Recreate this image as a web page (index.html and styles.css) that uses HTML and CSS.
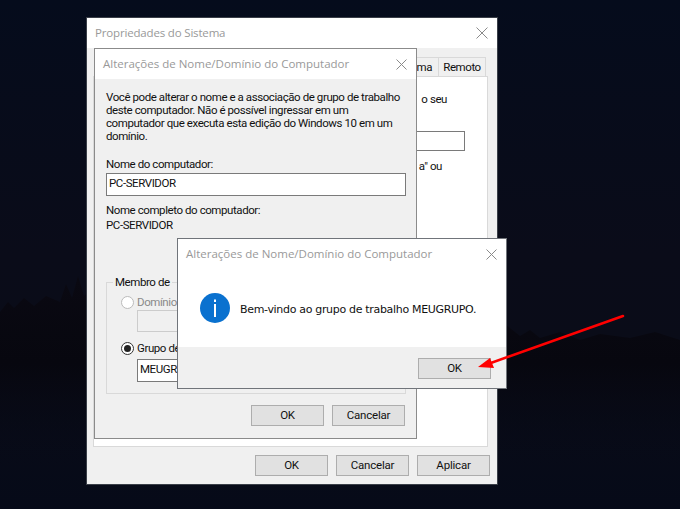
FILE: index.html
```html
<!DOCTYPE html>
<html lang="pt-BR">
<head>
<meta charset="utf-8">
<title>Propriedades do Sistema</title>
<link rel="stylesheet" href="styles.css">
</head>
<body>
<main class="desktop">
  <svg class="scenery" width="680" height="509" viewBox="0 0 680 509" aria-hidden="true">
    <defs>
      <linearGradient id="fade" x1="0" y1="0" x2="0" y2="1">
        <stop offset="0" stop-color="#0a0912"/>
        <stop offset=".45" stop-color="#07070f"/>
        <stop offset="1" stop-color="#070a18" stop-opacity="0"/>
      </linearGradient>
    </defs>
    <path fill="url(#fade)" d="M0 312 L8 302 14 308 24 298 34 306 46 296 60 302 66 284 72 298 78 276 84 296 90 290 500 320 520 336 530 330 540 338 560 332 580 340 600 334 630 338 655 332 680 340 V470 H0Z"/>
  </svg>

  <section class="window sys">
    <header class="titlebar"><span class="title sys-title">Propriedades do Sistema</span><svg class="close" width="12" height="12" viewBox="0 0 12 12"><path d="M.5.5l11 11M11.500.5l-11 11"/></svg></header>
    <div class="sys-body">
      <nav class="tabs">
        <span class="tab tab-cut">ema</span>
        <span class="tab tab-remote">Remoto</span>
      </nav>
      <div class="panel">
        <p class="hint">o seu</p>
        <div class="panel-input"></div>
        <p class="hint example">a" ou</p>
      </div>
      <footer class="actions sys-actions">
        <button class="btn">OK</button>
        <button class="btn">Cancelar</button>
        <button class="btn">Aplicar</button>
      </footer>
    </div>
  </section>

  <section class="window rename">
    <header class="titlebar"><span class="title">Alterações de Nome/Domínio do Computador</span><svg class="close" width="11" height="11" viewBox="0 0 11 11"><path d="M.5.5l10 10M10.500.5l-10 10"/></svg></header>
    <div class="rename-body">
      <p class="intro">Você pode alterar o nome e a associação de grupo de trabalho<br>deste computador. Não é possível ingressar em um<br>computador que executa esta edição do Windows 10 em um<br>domínio.</p>
      <label class="field-label">Nome do computador:</label>
      <div class="input name-input">PC-SERVIDOR</div>
      <p class="full-label">Nome completo do computador:</p>
      <p class="full-value">PC-SERVIDOR</p>
      <fieldset class="member">
        <legend>Membro de</legend>
        <div class="radio-row disabled"><span class="radio"></span><span>Domínio</span></div>
        <div class="input sub-input blank"></div>
        <div class="radio-row"><span class="radio on"></span><span>Grupo de</span></div>
        <div class="input sub-input second">MEUGR</div>
      </fieldset>
      <footer class="actions rename-actions">
        <button class="btn">OK</button>
        <button class="btn">Cancelar</button>
      </footer>
    </div>
  </section>

  <section class="window welcome">
    <header class="titlebar"><span class="title">Alterações de Nome/Domínio do Computador</span><svg class="close" width="11" height="11" viewBox="0 0 11 11"><path d="M.5.5l10 10M10.500.5l-10 10"/></svg></header>
    <div class="message">
      <svg class="info" width="30" height="30" viewBox="0 0 30 30"><circle cx="15" cy="15" r="15" fill="#0a71cf"/><rect x="14" y="6.500" width="2" height="2.500" fill="#fff"/><rect x="14" y="11" width="2" height="13" fill="#fff"/></svg>
      <span class="message-text">Bem-vindo ao grupo de trabalho MEUGRUPO.</span>
    </div>
    <footer class="welcome-foot"><button class="btn">OK</button></footer>
  </section>

  <svg class="arrow" width="680" height="509" viewBox="0 0 680 509" aria-hidden="true">
    <path d="M623 316 L488 364" stroke="#f00" stroke-width="2.500" stroke-linecap="round" fill="none"/>
    <path d="M478 367 L490 358 L494 368Z" fill="#f00"/>
  </svg>
</main>
</body>
</html>
```
FILE: styles.css
```css
* { box-sizing: border-box; }
html, body { margin: 0; padding: 0; }
body { width: 680px; height: 509px; overflow: hidden; }
p { margin: 0; }

.desktop {
  position: relative;
  width: 680px;
  height: 509px;
  overflow: hidden;
  background: linear-gradient(180deg, #050c1c 0%, #0a0c19 50%, #0a0c18 70%, #060a18 100%);
  font: 11.500px/13px Roboto, "Liberation Sans", sans-serif;
  letter-spacing: -.42px;
  color: #111;
}
.scenery, .arrow { position: absolute; left: 0; top: 0; }

.window {
  position: absolute;
  display: flex;
  flex-direction: column;
  background: #f0f0f0;
  border: 1px solid #5a5f66;
}
.sys { left: 86px; top: 17px; width: 412px; height: 468px; border-color: #3a3f48; }
.rename { left: 94px; top: 48px; width: 323px; height: 391px; border-color: #8b8b8b; }
.welcome { left: 177px; top: 238px; width: 330px; height: 151px; background: #fff; border-color: #70747a; }

.titlebar {
  flex: none;
  display: flex;
  align-items: center;
  justify-content: space-between;
  height: 30px;
  padding: 0 9px 0 8px;
  background: #fff;
}
.title { font: 11.500px/16px "Open Sans", sans-serif; color: #999; letter-spacing: 0; white-space: nowrap; }
.sys-title { letter-spacing: -.17px; }
.close { flex: none; }
.close path { stroke: #8a8a8a; stroke-width: 1; fill: none; }

.sys-body { flex: 1; display: flex; flex-direction: column; padding: 9px 9px 0 6px; min-height: 0; }
.tabs { display: flex; justify-content: flex-end; height: 19px; padding-right: 2px; }
.tab {
  padding: 3px 6px 0 6px;
  background: #f0f0f0;
  border: 1px solid #d9d9d9;
  border-bottom: 0;
  white-space: nowrap;
  margin-left: -1px;
}
.tab-cut { padding-left: 0; border-left: 0; }
.tab-remote { width: 48px; text-align: center; padding: 3px 0 0; }
.panel {
  height: 371px;
  background: #fff;
  border: 1px solid #d9d9d9;
  padding: 16px 40px 0 0;
  text-align: right;
  overflow: hidden;
}
.hint { white-space: nowrap; }
.panel-input { height: 20px; margin: 25px -18px 0 0; border: 1px solid #7a7a7a; background: #fff; }
.example { margin-top: 9px; margin-right: 5px; }

.actions { display: flex; justify-content: flex-end; gap: 8px; }
.sys-actions { margin: 8px -2px 0 0; }
.btn {
  width: 73px;
  height: 21px;
  padding: 0;
  background: #e1e1e1;
  border: 1px solid #adadad;
  border-radius: 0;
  font: 11.500px/13px Roboto, "Liberation Sans", sans-serif;
  letter-spacing: -.2px;
  color: #111;
}

.rename-body { flex: 1; padding: 12px 10px 0 11px; display: flex; flex-direction: column; }
.intro { height: 52px; white-space: nowrap; }
.field-label { display: block; margin-top: 15px; }
.input {
  height: 23px;
  border: 1px solid #7a7a7a;
  background: #fff;
  padding: 3px 2px 0 2px;
  white-space: nowrap;
  overflow: hidden;
}
.name-input { width: 300px; margin-top: 2px; }
.full-label { margin-top: 8px; }
.full-value { margin-top: 2px; }
.member {
  width: 300px;
  height: 118px;
  margin: 44px 0 0 0;
  padding: 7px 10px 0 14px;
  border: 1px solid #d9d9d9;
  min-width: 0;
}
.member legend { padding: 0 2px; margin-left: -8px; line-height: 13px; }
.radio-row { display: flex; align-items: center; gap: 3px; height: 13px; }
.radio {
  flex: none;
  width: 13px;
  height: 13px;
  border: 1px solid #333;
  border-radius: 50%;
  background: #fff;
  display: flex;
  align-items: center;
  justify-content: center;
}
.radio.on::after { content: ""; width: 7px; height: 7px; border-radius: 50%; background: #222; }
.disabled { color: #8a8a8a; }
.disabled .radio { border-color: #bbb; }
.sub-input { width: 250px; margin: 1px 0 0 16px; }
.sub-input.blank { height: 22px; background: #f0f0f0; border-color: #ccc; margin-bottom: 10px; }
.sub-input.second { margin-top: 4px; }
.rename-actions { margin-top: 11px; margin-right: 1px; }

.message { flex: 1; display: flex; align-items: center; gap: 10px; padding: 0 0 0 22px; }
.info { flex: none; }
.message-text { font: 11px/16px "DejaVu Sans", sans-serif; letter-spacing: -.32px; color: #111; white-space: nowrap; margin-top: 3px; }
.welcome-foot {
  flex: none;
  display: flex;
  justify-content: flex-end;
  height: 41px;
  padding: 11px 15px 0 0;
  background: #f0f0f0;
}
```
